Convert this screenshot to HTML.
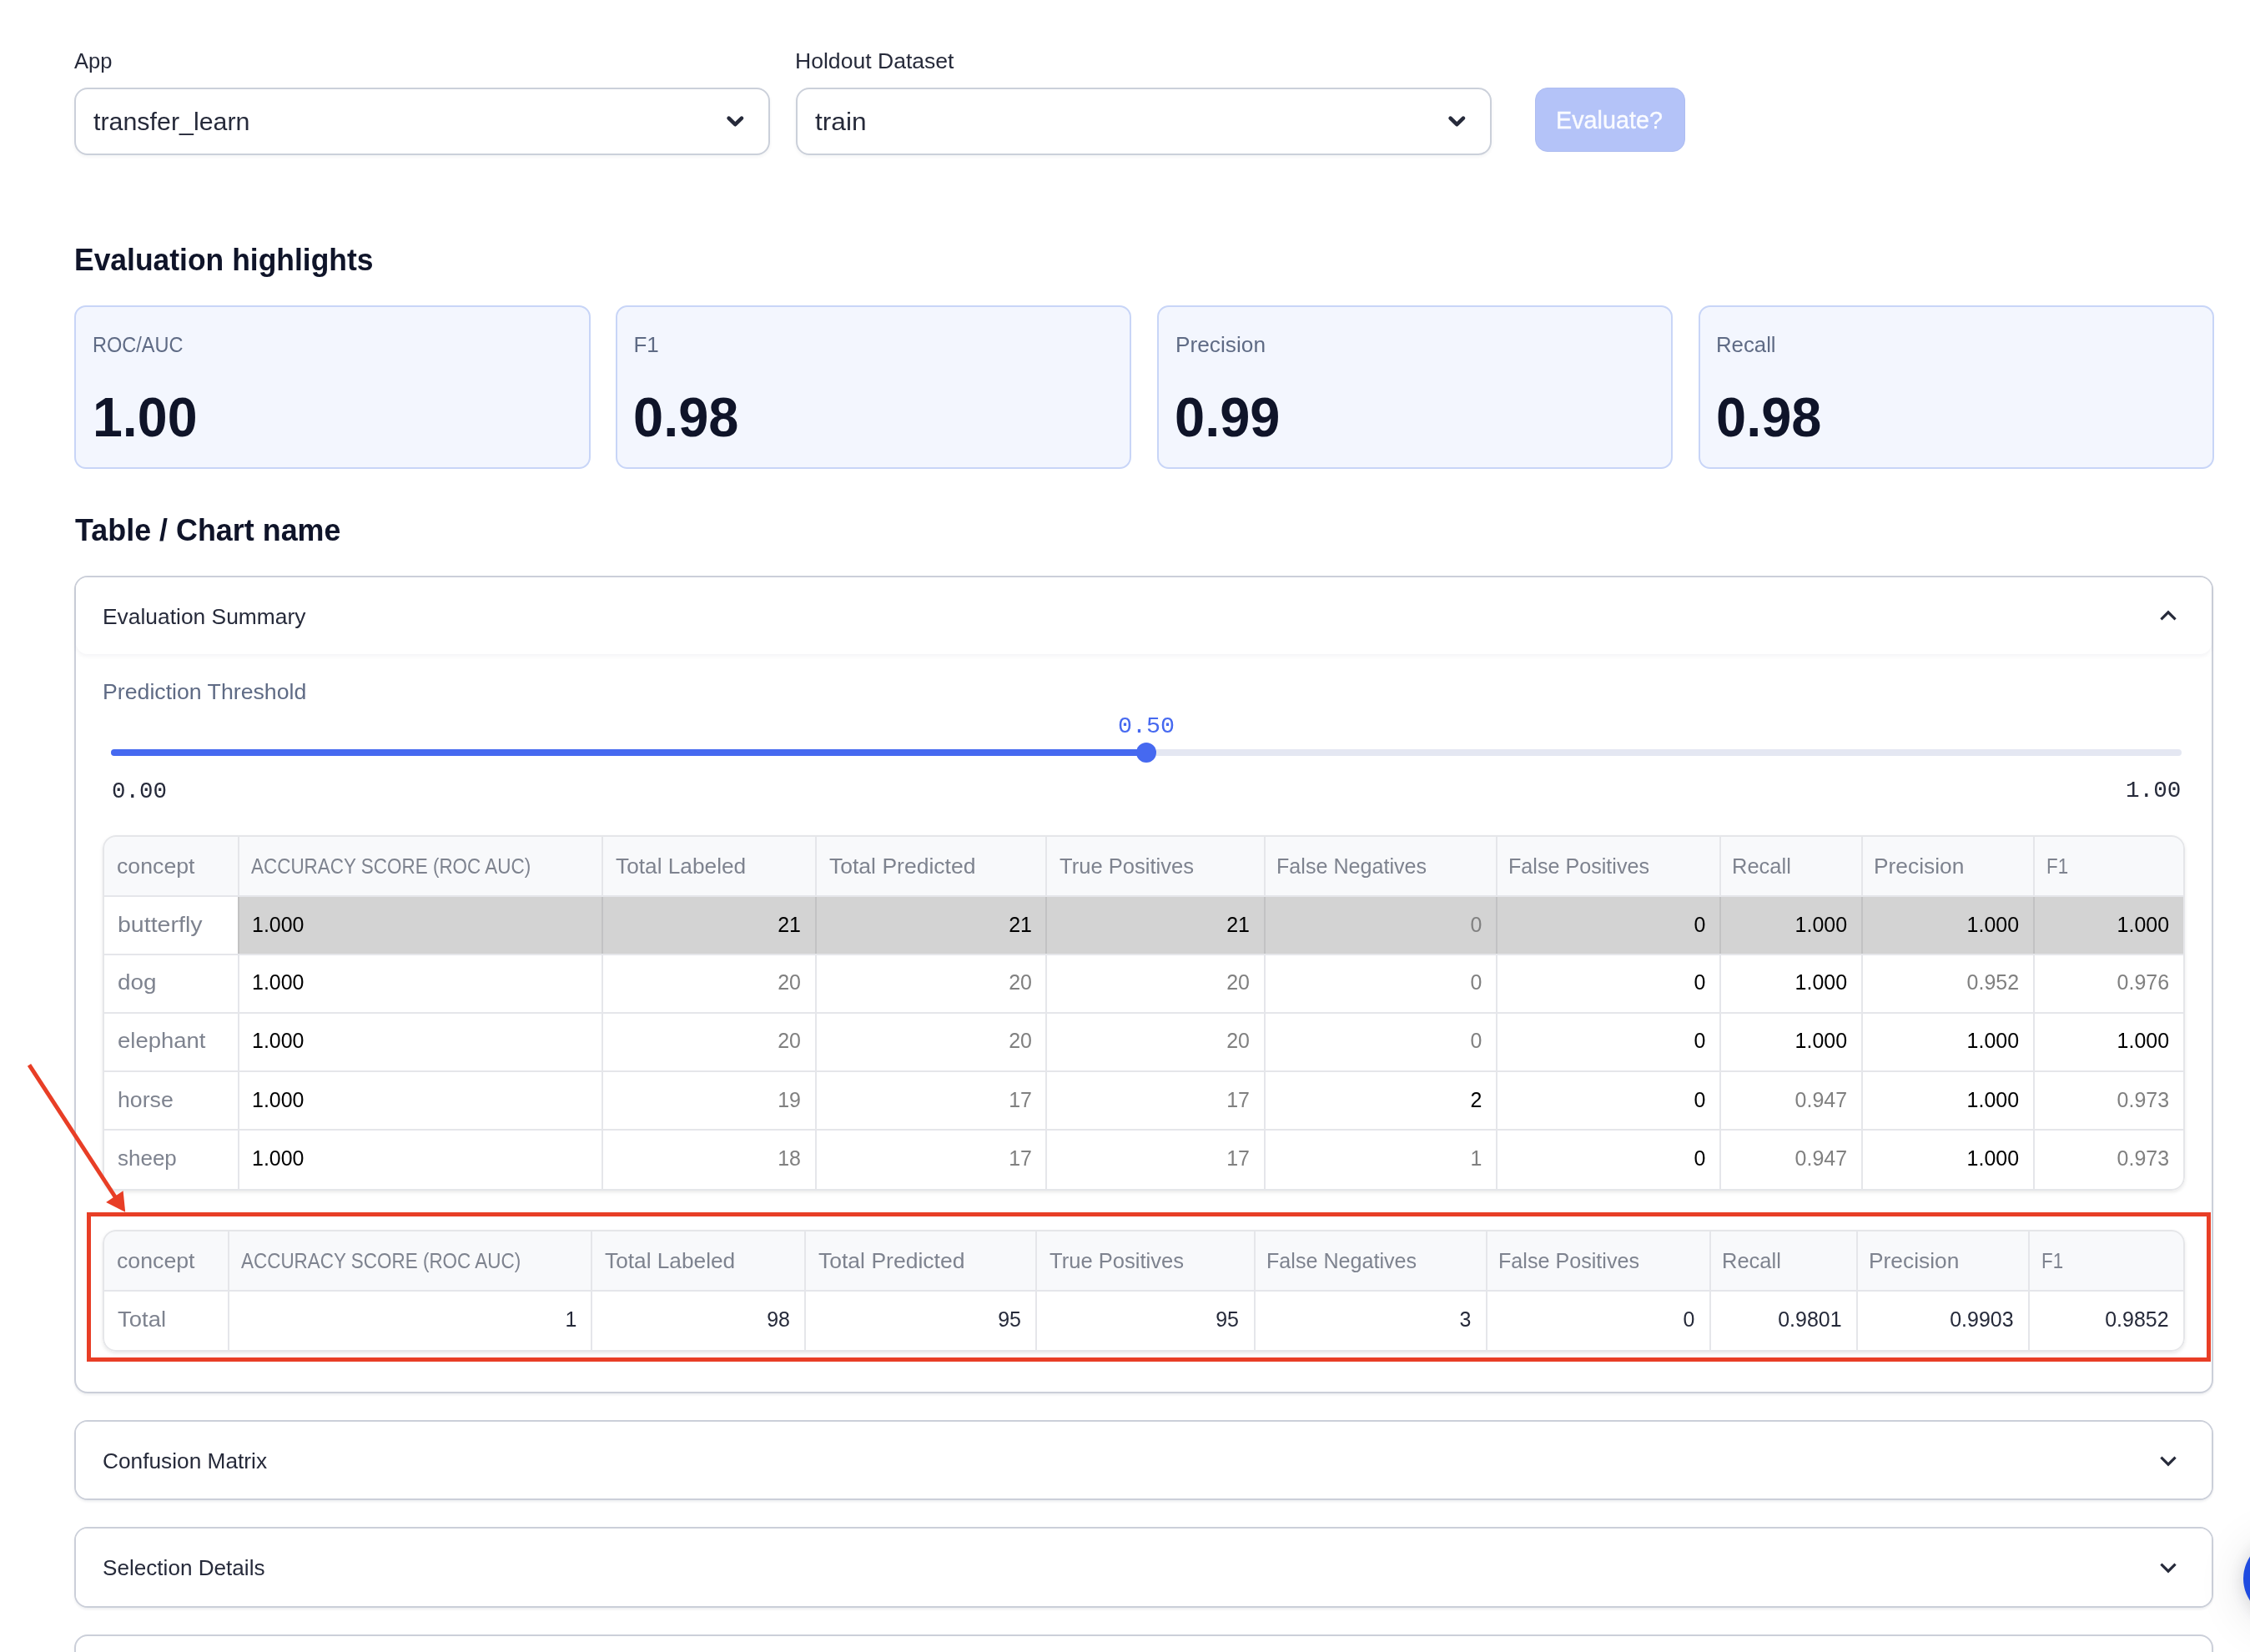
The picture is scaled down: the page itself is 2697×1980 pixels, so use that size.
<!DOCTYPE html>
<html lang="en"><head><meta charset="utf-8"><title>Evaluation</title>
<style>
html,body{margin:0;padding:0;background:#fff}
body{width:2697px;height:1980px;position:relative;overflow:hidden;font-family:'Liberation Sans',sans-serif;color:#262a3a}
#pg{position:absolute;left:0;top:0;width:2697px;height:1980px;overflow:hidden;will-change:transform}
#pg div,#pg section,#pg header,#pg button,#pg svg{position:absolute;box-sizing:border-box;margin:0;padding:0}
.a,.c{position:absolute;margin:0;padding:0;white-space:pre;line-height:1;display:inline-block;transform-origin:0 0;font-weight:400}
.a.r,.c.r{transform-origin:100% 0}
.c{font-size:26px}
.mono{font-family:'Liberation Mono',monospace}
.sel{border:2px solid #cbd0da;border-radius:16px;background:#fff;box-shadow:0 2px 4px rgba(20,30,60,.05)}
.btn{border-radius:15px;background:#b4c3f8;border:1px solid #adbcf0;font:inherit}
.btn span{-webkit-text-stroke:.35px #fafbff}
.card{border:2px solid #c8d5f7;border-radius:14px;background:#f3f6fe}
.exp{border:2px solid #cbcfd9;border-radius:16px;background:#fff;box-shadow:0 2px 3px rgba(20,30,60,.07)}
.exph{border-radius:14px;background:#fff}
.exph.open{box-shadow:0 3px 5px rgba(20,30,60,.045)}
.tbl{border-radius:16px;background:#fff;box-shadow:0 2px 4px rgba(0,0,0,.09);overflow:hidden}
.tbrd{left:0;top:0;right:0;bottom:0;border:2px solid #e5e6e9;border-radius:16px}
.thbg{left:0;top:0;right:0;background:#f8f9fb}
.hl{background:#d3d3d3}
.hline{left:0;right:0;height:2px;background:#e5e6ea}
.vline{top:0;bottom:0;width:2px;background:#e5e6ea}
.vline.dk{bottom:auto;background:#c2c2c3}
.th{color:#7e838f}
.num{transform:scaleX(.96)}
.track{border-radius:4px;background:#e4e7f2}
.fill{left:0;top:0;border-radius:4px;background:#4669f0}
.thumb{border-radius:50%;background:#4669f0}
.red{border:5px solid #e83e26}
.fab{border-radius:50%;background:#1f4be0;box-shadow:0 6px 60px rgba(0,0,30,.12),0 2px 22px rgba(0,0,30,.13)}
svg{overflow:visible}
</style></head>
<body>
<main id="pg" style="left:0px;top:0px;width:2697px;height:1980px;">
 <label class="a" style="left:89.3px;top:60px;font-size:26px;color:#262a3a;transform:scaleX(0.9813);">App</label>
 <div class="sel" role="combobox" style="left:89.1px;top:105.1px;width:833.8px;height:80.7px;">
  <span class="a" style="left:20.9px;top:23.5px;font-size:30px;color:#262a3a;transform:scaleX(1.0129);">transfer_learn</span>
  <svg style="left:779.6px;top:31.6px" width="20.6" height="13" viewBox="0 0 20.6 13"><path d="M2.6 2.6 L10.3 10.2 L18 2.6" fill="none" stroke="#262a3a" stroke-width="4.6" stroke-linecap="round" stroke-linejoin="round"/></svg>
 </div>
 <label class="a" style="left:953.3px;top:60px;font-size:26px;color:#262a3a;transform:scaleX(1.0217);">Holdout Dataset</label>
 <div class="sel" role="combobox" style="left:954.2px;top:105.1px;width:834.2px;height:80.7px;">
  <span class="a" style="left:21px;top:23.5px;font-size:30px;color:#262a3a;transform:scaleX(1.0538);">train</span>
  <svg style="left:779.5px;top:31.6px" width="20.6" height="13" viewBox="0 0 20.6 13"><path d="M2.6 2.6 L10.3 10.2 L18 2.6" fill="none" stroke="#262a3a" stroke-width="4.6" stroke-linecap="round" stroke-linejoin="round"/></svg>
 </div>
 <button class="btn" type="button" disabled style="left:1840px;top:105px;width:180px;height:77px;">
  <span class="a" style="left:24px;top:22.6px;font-size:30px;color:#fafbff;transform:scaleX(0.9593);">Evaluate?</span>
 </button>
 <h3 class="a" style="left:89.2px;top:292.9px;font-size:37px;font-weight:700;color:#0f1429;transform:scaleX(0.9582);">Evaluation highlights</h3>
 <div class="card" style="left:88.8px;top:365.9px;width:618.8px;height:195.8px;">
  <span class="a" style="left:20px;top:32.1px;font-size:26px;color:#5f6b85;transform:scaleX(0.9049);">ROC/AUC</span>
  <span class="a" style="left:20.4px;top:99.5px;font-size:66px;font-weight:700;color:#0f1429;transform:scaleX(0.9769);">1.00</span>
 </div>
 <div class="card" style="left:737.7px;top:365.9px;width:618.8px;height:195.8px;">
  <span class="a" style="left:19.7px;top:32.1px;font-size:26px;color:#5f6b85;">F1</span>
  <span class="a" style="left:19.7px;top:99.5px;font-size:66px;font-weight:700;color:#0f1429;transform:scaleX(0.9847);">0.98</span>
 </div>
 <div class="card" style="left:1386.6px;top:365.9px;width:618.8px;height:195.8px;">
  <span class="a" style="left:20.6px;top:32.1px;font-size:26px;color:#5f6b85;transform:scaleX(1.0099);">Precision</span>
  <span class="a" style="left:19.7px;top:99.5px;font-size:66px;font-weight:700;color:#0f1429;transform:scaleX(0.9847);">0.99</span>
 </div>
 <div class="card" style="left:2035.5px;top:365.9px;width:618.8px;height:195.8px;">
  <span class="a" style="left:19px;top:32.1px;font-size:26px;color:#5f6b85;transform:scaleX(0.9910);">Recall</span>
  <span class="a" style="left:19.7px;top:99.5px;font-size:66px;font-weight:700;color:#0f1429;transform:scaleX(0.9847);">0.98</span>
 </div>
 <h3 class="a" style="left:90px;top:617.2px;font-size:37px;font-weight:700;color:#0f1429;transform:scaleX(0.9702);">Table / Chart name</h3>
 <section class="exp" style="left:89.4px;top:689.9px;width:2563.5px;height:980.4px;">
  <header class="exph open" style="left:0px;top:0px;height:92px;left:0;right:0;">
   <span class="a" style="left:31.6px;top:34.5px;font-size:26px;color:#262a3a;transform:scaleX(1.0150);">Evaluation Summary</span>
   <svg style="left:2497.6px;top:40.1px" width="20" height="12" viewBox="0 0 20 12"><path d="M1.4 10.4 L10 1.8 L18.6 10.4" fill="none" stroke="#262a3a" stroke-width="3.1"/></svg>
  </header>
  <label class="a" style="left:31.6px;top:123.9px;font-size:26px;color:#5f6b85;transform:scaleX(1.0265);">Prediction Threshold</label>
  <span class="a mono" style="left:1248.8px;top:164.7px;font-size:28px;color:#4669f0;transform:scaleX(1.0116);">0.50</span>
  <div class="track" role="slider" aria-valuemin="0" aria-valuemax="1" aria-valuenow="0.5" style="left:41.4px;top:206.1px;width:2482.2px;height:8px;">
   <div class="fill" style="left:0px;top:0px;width:1241.2px;height:8px;">
   </div>
  </div>
  <div class="thumb" style="left:1270.6px;top:198.1px;width:24px;height:24px;">
  </div>
  <span class="a mono" style="left:42.4px;top:242.7px;font-size:28px;color:#262a3a;transform:scaleX(0.9819);">0.00</span>
  <span class="a mono" style="left:2457.1px;top:242.2px;font-size:28px;color:#262a3a;transform:scaleX(0.9863);">1.00</span>
  <div class="tbl" role="table" style="left:31.8px;top:309.4px;width:2496px;height:425.3px;">
   <div class="thbg" style="left:0px;top:0px;height:72.7px;left:0;top:0;">
   </div>
   <div class="hl" style="left:162.4px;top:72.7px;width:2333.6px;height:69.7px;">
   </div>
   <div class="hline" style="left:0px;top:71.7px;left:0;">
   </div>
   <div class="hline" style="left:0px;top:141.4px;left:0;">
   </div>
   <div class="hline" style="left:0px;top:211.3px;left:0;">
   </div>
   <div class="hline" style="left:0px;top:281.7px;left:0;">
   </div>
   <div class="hline" style="left:0px;top:351.6px;left:0;">
   </div>
   <div class="vline" style="left:161.4px;top:0px;top:0;">
   </div>
   <div class="vline" style="left:597.7px;top:0px;top:0;">
   </div>
   <div class="vline" style="left:853.7px;top:0px;top:0;">
   </div>
   <div class="vline" style="left:1129.9px;top:0px;top:0;">
   </div>
   <div class="vline" style="left:1391.6px;top:0px;top:0;">
   </div>
   <div class="vline" style="left:1669.9px;top:0px;top:0;">
   </div>
   <div class="vline" style="left:1937.6px;top:0px;top:0;">
   </div>
   <div class="vline" style="left:2107.6px;top:0px;top:0;">
   </div>
   <div class="vline" style="left:2313.8px;top:0px;top:0;">
   </div>
   <div class="vline dk" style="left:161.4px;top:73.7px;height:67.7px;">
   </div>
   <div class="vline dk" style="left:597.7px;top:73.7px;height:67.7px;">
   </div>
   <div class="vline dk" style="left:853.7px;top:73.7px;height:67.7px;">
   </div>
   <div class="vline dk" style="left:1129.9px;top:73.7px;height:67.7px;">
   </div>
   <div class="vline dk" style="left:1391.6px;top:73.7px;height:67.7px;">
   </div>
   <div class="vline dk" style="left:1669.9px;top:73.7px;height:67.7px;">
   </div>
   <div class="vline dk" style="left:1937.6px;top:73.7px;height:67.7px;">
   </div>
   <div class="vline dk" style="left:2107.6px;top:73.7px;height:67.7px;">
   </div>
   <div class="vline dk" style="left:2313.8px;top:73.7px;height:67.7px;">
   </div>
   <span class="c th" style="left:16.8px;top:23.9px;font-size:26px;transform:scaleX(1.0266);">concept</span>
   <span class="c th" style="left:177.9px;top:23.9px;font-size:26px;transform:scaleX(0.8636);">ACCURACY SCORE (ROC AUC)</span>
   <span class="c th" style="left:614.7px;top:23.9px;font-size:26px;transform:scaleX(1.0098);">Total Labeled</span>
   <span class="c th" style="left:870.7px;top:23.9px;font-size:26px;transform:scaleX(1.0199);">Total Predicted</span>
   <span class="c th" style="left:1146.9px;top:23.9px;font-size:26px;transform:scaleX(0.9831);">True Positives</span>
   <span class="c th" style="left:1406.6px;top:23.9px;font-size:26px;transform:scaleX(0.9661);">False Negatives</span>
   <span class="c th" style="left:1684.9px;top:23.9px;font-size:26px;transform:scaleX(0.9666);">False Positives</span>
   <span class="c th" style="left:1952.9px;top:23.9px;font-size:26px;transform:scaleX(0.9799);">Recall</span>
   <span class="c th" style="left:2122.6px;top:23.9px;font-size:26px;transform:scaleX(1.0127);">Precision</span>
   <span class="c th" style="left:2329.8px;top:23.9px;font-size:26px;transform:scaleX(0.8601);">F1</span>
   <span class="c th" style="left:18px;top:93.4px;font-size:26px;transform:scaleX(1.0973);">butterfly</span>
   <span class="c num" style="left:178.9px;top:93.4px;font-size:26px;color:#000;">1.000</span>
   <span class="c num r" style="right:1658.8px;top:93.4px;font-size:26px;color:#000;">21</span>
   <span class="c num r" style="right:1382.6px;top:93.4px;font-size:26px;color:#000;">21</span>
   <span class="c num r" style="right:1120.9px;top:93.4px;font-size:26px;color:#000;">21</span>
   <span class="c num r" style="right:842.6px;top:93.4px;font-size:26px;color:#808080;">0</span>
   <span class="c num r" style="right:574.9px;top:93.4px;font-size:26px;color:#000;">0</span>
   <span class="c num r" style="right:404.9px;top:93.4px;font-size:26px;color:#000;">1.000</span>
   <span class="c num r" style="right:198.7px;top:93.4px;font-size:26px;color:#000;">1.000</span>
   <span class="c num r" style="right:19.2px;top:93.4px;font-size:26px;color:#000;">1.000</span>
   <span class="c th" style="left:18px;top:163.1px;font-size:26px;transform:scaleX(1.0717);">dog</span>
   <span class="c num" style="left:178.9px;top:163.1px;font-size:26px;color:#000;">1.000</span>
   <span class="c num r" style="right:1658.8px;top:163.1px;font-size:26px;color:#808080;">20</span>
   <span class="c num r" style="right:1382.6px;top:163.1px;font-size:26px;color:#808080;">20</span>
   <span class="c num r" style="right:1120.9px;top:163.1px;font-size:26px;color:#808080;">20</span>
   <span class="c num r" style="right:842.6px;top:163.1px;font-size:26px;color:#808080;">0</span>
   <span class="c num r" style="right:574.9px;top:163.1px;font-size:26px;color:#000;">0</span>
   <span class="c num r" style="right:404.9px;top:163.1px;font-size:26px;color:#000;">1.000</span>
   <span class="c num r" style="right:198.7px;top:163.1px;font-size:26px;color:#808080;">0.952</span>
   <span class="c num r" style="right:19.2px;top:163.1px;font-size:26px;color:#808080;">0.976</span>
   <span class="c th" style="left:18px;top:233px;font-size:26px;transform:scaleX(1.0575);">elephant</span>
   <span class="c num" style="left:178.9px;top:233px;font-size:26px;color:#000;">1.000</span>
   <span class="c num r" style="right:1658.8px;top:233px;font-size:26px;color:#808080;">20</span>
   <span class="c num r" style="right:1382.6px;top:233px;font-size:26px;color:#808080;">20</span>
   <span class="c num r" style="right:1120.9px;top:233px;font-size:26px;color:#808080;">20</span>
   <span class="c num r" style="right:842.6px;top:233px;font-size:26px;color:#808080;">0</span>
   <span class="c num r" style="right:574.9px;top:233px;font-size:26px;color:#000;">0</span>
   <span class="c num r" style="right:404.9px;top:233px;font-size:26px;color:#000;">1.000</span>
   <span class="c num r" style="right:198.7px;top:233px;font-size:26px;color:#000;">1.000</span>
   <span class="c num r" style="right:19.2px;top:233px;font-size:26px;color:#000;">1.000</span>
   <span class="c th" style="left:18px;top:303.4px;font-size:26px;transform:scaleX(1.0270);">horse</span>
   <span class="c num" style="left:178.9px;top:303.4px;font-size:26px;color:#000;">1.000</span>
   <span class="c num r" style="right:1658.8px;top:303.4px;font-size:26px;color:#808080;">19</span>
   <span class="c num r" style="right:1382.6px;top:303.4px;font-size:26px;color:#808080;">17</span>
   <span class="c num r" style="right:1120.9px;top:303.4px;font-size:26px;color:#808080;">17</span>
   <span class="c num r" style="right:842.6px;top:303.4px;font-size:26px;color:#000;">2</span>
   <span class="c num r" style="right:574.9px;top:303.4px;font-size:26px;color:#000;">0</span>
   <span class="c num r" style="right:404.9px;top:303.4px;font-size:26px;color:#808080;">0.947</span>
   <span class="c num r" style="right:198.7px;top:303.4px;font-size:26px;color:#000;">1.000</span>
   <span class="c num r" style="right:19.2px;top:303.4px;font-size:26px;color:#808080;">0.973</span>
   <span class="c th" style="left:18px;top:373.3px;font-size:26px;transform:scaleX(0.9994);">sheep</span>
   <span class="c num" style="left:178.9px;top:373.3px;font-size:26px;color:#000;">1.000</span>
   <span class="c num r" style="right:1658.8px;top:373.3px;font-size:26px;color:#808080;">18</span>
   <span class="c num r" style="right:1382.6px;top:373.3px;font-size:26px;color:#808080;">17</span>
   <span class="c num r" style="right:1120.9px;top:373.3px;font-size:26px;color:#808080;">17</span>
   <span class="c num r" style="right:842.6px;top:373.3px;font-size:26px;color:#808080;">1</span>
   <span class="c num r" style="right:574.9px;top:373.3px;font-size:26px;color:#000;">0</span>
   <span class="c num r" style="right:404.9px;top:373.3px;font-size:26px;color:#808080;">0.947</span>
   <span class="c num r" style="right:198.7px;top:373.3px;font-size:26px;color:#000;">1.000</span>
   <span class="c num r" style="right:19.2px;top:373.3px;font-size:26px;color:#808080;">0.973</span>
   <div class="tbrd" style="left:0px;top:0px;left:0;top:0;">
   </div>
  </div>
  <div class="red" style="left:12.6px;top:761.1px;width:2545.8px;height:179px;">
   <div class="tbl" role="table" style="left:14.2px;top:16px;width:2495.8px;height:145.8px;">
    <div class="thbg" style="left:0px;top:0px;height:72.7px;left:0;top:0;">
    </div>
    <div class="hline" style="left:0px;top:71.7px;left:0;">
    </div>
    <div class="vline" style="left:149.5px;top:0px;top:0;">
    </div>
    <div class="vline" style="left:585.1px;top:0px;top:0;">
    </div>
    <div class="vline" style="left:841.1px;top:0px;top:0;">
    </div>
    <div class="vline" style="left:1117.7px;top:0px;top:0;">
    </div>
    <div class="vline" style="left:1379.5px;top:0px;top:0;">
    </div>
    <div class="vline" style="left:1657.9px;top:0px;top:0;">
    </div>
    <div class="vline" style="left:1925.7px;top:0px;top:0;">
    </div>
    <div class="vline" style="left:2101.7px;top:0px;top:0;">
    </div>
    <div class="vline" style="left:2307.7px;top:0px;top:0;">
    </div>
    <span class="c th" style="left:16.8px;top:23.9px;font-size:26px;transform:scaleX(1.0266);">concept</span>
    <span class="c th" style="left:166px;top:23.9px;font-size:26px;transform:scaleX(0.8636);">ACCURACY SCORE (ROC AUC)</span>
    <span class="c th" style="left:602.1px;top:23.9px;font-size:26px;transform:scaleX(1.0098);">Total Labeled</span>
    <span class="c th" style="left:858.1px;top:23.9px;font-size:26px;transform:scaleX(1.0199);">Total Predicted</span>
    <span class="c th" style="left:1134.7px;top:23.9px;font-size:26px;transform:scaleX(0.9831);">True Positives</span>
    <span class="c th" style="left:1394.5px;top:23.9px;font-size:26px;transform:scaleX(0.9661);">False Negatives</span>
    <span class="c th" style="left:1672.9px;top:23.9px;font-size:26px;transform:scaleX(0.9666);">False Positives</span>
    <span class="c th" style="left:1941px;top:23.9px;font-size:26px;transform:scaleX(0.9799);">Recall</span>
    <span class="c th" style="left:2116.7px;top:23.9px;font-size:26px;transform:scaleX(1.0127);">Precision</span>
    <span class="c th" style="left:2323.7px;top:23.9px;font-size:26px;transform:scaleX(0.8601);">F1</span>
    <span class="c th" style="left:18px;top:94px;font-size:26px;transform:scaleX(1.0560);">Total</span>
    <span class="c num r" style="right:1928px;top:94px;font-size:26px;color:#262a3a;">1</span>
    <span class="c num r" style="right:1672px;top:94px;font-size:26px;color:#262a3a;">98</span>
    <span class="c num r" style="right:1395.4px;top:94px;font-size:26px;color:#262a3a;">95</span>
    <span class="c num r" style="right:1133.6px;top:94px;font-size:26px;color:#262a3a;">95</span>
    <span class="c num r" style="right:855.2px;top:94px;font-size:26px;color:#262a3a;">3</span>
    <span class="c num r" style="right:587.4px;top:94px;font-size:26px;color:#262a3a;">0</span>
    <span class="c num r" style="right:411.4px;top:94px;font-size:26px;color:#262a3a;">0.9801</span>
    <span class="c num r" style="right:205.4px;top:94px;font-size:26px;color:#262a3a;">0.9903</span>
    <span class="c num r" style="right:19.5px;top:94px;font-size:26px;color:#262a3a;">0.9852</span>
    <div class="tbrd" style="left:0px;top:0px;left:0;top:0;">
    </div>
   </div>
  </div>
 </section>
 <section class="exp" style="left:89.4px;top:1701.6px;width:2563.5px;height:96.9px;">
  <header class="exph" style="left:0px;top:0px;height:92.9px;left:0;right:0;">
   <span class="a" style="left:31.6px;top:34.4px;font-size:26px;color:#262a3a;transform:scaleX(1.0099);">Confusion Matrix</span>
   <svg style="left:2497.6px;top:41.2px" width="20" height="12" viewBox="0 0 20 12"><path d="M1.4 1.6 L10 10.2 L18.6 1.6" fill="none" stroke="#262a3a" stroke-width="3.1"/></svg>
  </header>
 </section>
 <section class="exp" style="left:89.4px;top:1830px;width:2563.5px;height:97px;">
  <header class="exph" style="left:0px;top:0px;height:93px;left:0;right:0;">
   <span class="a" style="left:31.6px;top:34px;font-size:26px;color:#262a3a;transform:scaleX(1.0044);">Selection Details</span>
   <svg style="left:2497.6px;top:41.3px" width="20" height="12" viewBox="0 0 20 12"><path d="M1.4 1.6 L10 10.2 L18.6 1.6" fill="none" stroke="#262a3a" stroke-width="3.1"/></svg>
  </header>
 </section>
 <section class="exp" style="left:89.4px;top:1959.2px;width:2563.5px;height:96.7px;">
 </section>
 <svg style="left:0px;top:0px" width="200" height="1500" viewBox="0 0 200 1500"><path d="M35 1276.4 L139 1436" fill="none" stroke="#e83e26" stroke-width="5"/><path d="M150.2 1452.8 L127.1 1440.9 L147.6 1427.2 Z" fill="#e83e26"/></svg>
 <div class="fab" style="left:2688.9px;top:1843.8px;width:96px;height:96px;">
 </div>
</main>
</body></html>
